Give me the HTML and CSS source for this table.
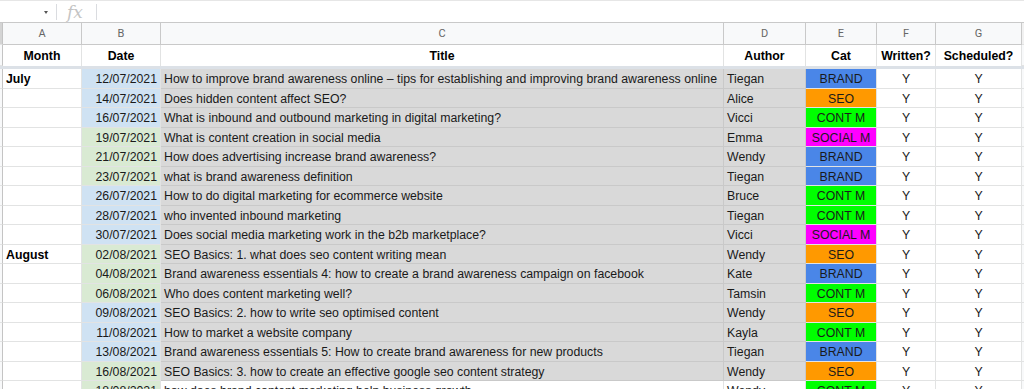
FILE: index.html
```html
<!DOCTYPE html>
<html>
<head>
<meta charset="utf-8">
<link rel="stylesheet" href="styles.css">
</head>
<body>
<div class="formula-bar">
  <div class="namebox"><span class="caret"></span></div>
  <div class="fsep"></div>
  <div class="fx">fx</div>
  <div class="fsep"></div>
</div>
<div class="sheet">
  <div class="rh ch"></div><div class="ch">A</div><div class="ch">B</div><div class="ch">C</div><div class="ch">D</div><div class="ch">E</div><div class="ch">F</div><div class="ch">G</div><div class="ch end"></div>

  <div class="rh"></div><div class="hd">Month</div><div class="hd">Date</div><div class="hd">Title</div><div class="hd">Author</div><div class="hd">Cat</div><div class="hd">Written?</div><div class="hd">Scheduled?</div><div class="end"></div>

  <div class="freeze"></div>

  <div class="rh"></div><div class="c month">July</div><div class="c date blue">12/07/2021</div><div class="c title">How to improve brand awareness online – tips for establishing and improving brand awareness online</div><div class="c author">Tiegan</div><div class="c cat brand">BRAND</div><div class="c yn">Y</div><div class="c yn">Y</div><div class="end"></div>

  <div class="rh"></div><div class="c month"></div><div class="c date blue">14/07/2021</div><div class="c title">Does hidden content affect SEO?</div><div class="c author">Alice</div><div class="c cat seo">SEO</div><div class="c yn">Y</div><div class="c yn">Y</div><div class="end"></div>

  <div class="rh"></div><div class="c month"></div><div class="c date blue">16/07/2021</div><div class="c title">What is inbound and outbound marketing in digital marketing?</div><div class="c author">Vicci</div><div class="c cat cont">CONT M</div><div class="c yn">Y</div><div class="c yn">Y</div><div class="end"></div>

  <div class="rh"></div><div class="c month"></div><div class="c date green">19/07/2021</div><div class="c title">What is content creation in social media</div><div class="c author">Emma</div><div class="c cat social">SOCIAL M</div><div class="c yn">Y</div><div class="c yn">Y</div><div class="end"></div>

  <div class="rh"></div><div class="c month"></div><div class="c date green">21/07/2021</div><div class="c title">How does advertising increase brand awareness?</div><div class="c author">Wendy</div><div class="c cat brand">BRAND</div><div class="c yn">Y</div><div class="c yn">Y</div><div class="end"></div>

  <div class="rh"></div><div class="c month"></div><div class="c date green">23/07/2021</div><div class="c title">what is brand awareness definition</div><div class="c author">Tiegan</div><div class="c cat brand">BRAND</div><div class="c yn">Y</div><div class="c yn">Y</div><div class="end"></div>

  <div class="rh"></div><div class="c month"></div><div class="c date blue">26/07/2021</div><div class="c title">How to do digital marketing for ecommerce website</div><div class="c author">Bruce</div><div class="c cat cont">CONT M</div><div class="c yn">Y</div><div class="c yn">Y</div><div class="end"></div>

  <div class="rh"></div><div class="c month"></div><div class="c date blue">28/07/2021</div><div class="c title">who invented inbound marketing</div><div class="c author">Tiegan</div><div class="c cat cont">CONT M</div><div class="c yn">Y</div><div class="c yn">Y</div><div class="end"></div>

  <div class="rh"></div><div class="c month"></div><div class="c date blue">30/07/2021</div><div class="c title">Does social media marketing work in the b2b marketplace?</div><div class="c author">Vicci</div><div class="c cat social">SOCIAL M</div><div class="c yn">Y</div><div class="c yn">Y</div><div class="end"></div>

  <div class="rh"></div><div class="c month">August</div><div class="c date green">02/08/2021</div><div class="c title">SEO Basics: 1. what does seo content writing mean</div><div class="c author">Wendy</div><div class="c cat seo">SEO</div><div class="c yn">Y</div><div class="c yn">Y</div><div class="end"></div>

  <div class="rh"></div><div class="c month"></div><div class="c date green">04/08/2021</div><div class="c title">Brand awareness essentials 4: how to create a brand awareness campaign on facebook</div><div class="c author">Kate</div><div class="c cat brand">BRAND</div><div class="c yn">Y</div><div class="c yn">Y</div><div class="end"></div>

  <div class="rh"></div><div class="c month"></div><div class="c date green">06/08/2021</div><div class="c title">Who does content marketing well?</div><div class="c author">Tamsin</div><div class="c cat cont">CONT M</div><div class="c yn">Y</div><div class="c yn">Y</div><div class="end"></div>

  <div class="rh"></div><div class="c month"></div><div class="c date blue">09/08/2021</div><div class="c title">SEO Basics: 2. how to write seo optimised content</div><div class="c author">Wendy</div><div class="c cat seo">SEO</div><div class="c yn">Y</div><div class="c yn">Y</div><div class="end"></div>

  <div class="rh"></div><div class="c month"></div><div class="c date blue">11/08/2021</div><div class="c title">How to market a website company</div><div class="c author">Kayla</div><div class="c cat cont">CONT M</div><div class="c yn">Y</div><div class="c yn">Y</div><div class="end"></div>

  <div class="rh"></div><div class="c month"></div><div class="c date blue">13/08/2021</div><div class="c title">Brand awareness essentials 5: How to create brand awareness for new products</div><div class="c author">Tiegan</div><div class="c cat brand">BRAND</div><div class="c yn">Y</div><div class="c yn">Y</div><div class="end"></div>

  <div class="rh"></div><div class="c month"></div><div class="c date green">16/08/2021</div><div class="c title">SEO Basics: 3. how to create an effective google seo content strategy</div><div class="c author">Wendy</div><div class="c cat seo">SEO</div><div class="c yn">Y</div><div class="c yn">Y</div><div class="end"></div>

  <div class="rh"></div><div class="c month"></div><div class="c date green">18/08/2021</div><div class="c title plain">how does brand content marketing help business growth</div><div class="c author plain">Wendy</div><div class="c cat cont">CONT M</div><div class="c yn">Y</div><div class="c yn">Y</div><div class="end"></div>
</div>
</body>
</html>
```

FILE: styles.css
```css
html, body {
  margin: 0;
  padding: 0;
  background: #fff;
  overflow: hidden;
  font-family: "Liberation Sans", Arial, sans-serif;
}

.formula-bar {
  height: 23px;
  box-sizing: border-box;
  border-top: 1px solid #e6e6e6;
  border-bottom: 1px solid #c9c9c9;
  display: flex;
  align-items: center;
  background: #fff;
}

.namebox {
  width: 56px;
  height: 100%;
  position: relative;
}

.caret {
  position: absolute;
  left: 44px;
  top: 10px;
  width: 0;
  height: 0;
  border-left: 2.5px solid transparent;
  border-right: 2.5px solid transparent;
  border-top: 3px solid #555;
}

.fsep {
  width: 1px;
  height: 16px;
  background: #dadce0;
}

.fx {
  width: 39px;
  padding-left: 10px;
  box-sizing: border-box;
  font-family: "DejaVu Serif", "Liberation Serif", serif;
  font-style: italic;
  font-size: 17px;
  color: #c4c4c4;
  line-height: 20px;
}

.sheet {
  display: grid;
  grid-template-columns: 3px 79px 79px 563px 82px 71px 59px 86px 2px;
  grid-template-rows: 22px 21px 3px repeat(17, 19.53px);
  font-size: 12.3px;
  color: #1a1a1a;
}

.sheet > div {
  box-sizing: border-box;
  white-space: nowrap;
  overflow: hidden;
}

.ch {
  background: #f8f9fa;
  color: #666;
  font-family: Roboto, "Liberation Sans", sans-serif;
  font-size: 11px;
  text-align: center;
  line-height: 22px;
  border-right: 1px solid #c9c9c9;
  border-bottom: 1px solid #c9c9c9;
}

.rh {
  background: #f8f9fa;
  border-right: 1px solid #c4c4c4;
  border-bottom: 1px solid #e2e3e3;
}

.rh.ch {
  background: #d4d4d4;
}

.end {
  background: #f8f9fa;
  border-bottom: 1px solid #e2e3e3;
}

.ch.end {
  background: #f1f1f1;
  border-right: none;
}

.hd {
  font-weight: bold;
  color: #000;
  text-align: center;
  line-height: 22px;
  border-right: 1px solid #e2e3e3;
}

.freeze {
  grid-column: 1 / -1;
  background: #dce1e7;
}

.c {
  line-height: 19px;
  padding: 1px 3px 0;
  border-right: 1px solid #e2e3e3;
  border-bottom: 1px solid #e2e3e3;
}

.month {
  font-weight: bold;
  color: #000;
}

.date {
  text-align: right;
}

.blue {
  background: #cfe2f3;
}

.green {
  background: #d9ead3;
}

.title, .author {
  background: #d9d9d9;
  border-right-color: #c9c9c9;
  border-bottom-color: #c9c9c9;
}

.title.plain, .author.plain {
  background: #fff;
  border-right-color: #e2e3e3;
  border-bottom-color: #e2e3e3;
}

.cat {
  text-align: center;
}

.brand {
  background: #4a86e8;
}

.seo {
  background: #ff9900;
}

.cont {
  background: #00ff00;
}

.social {
  background: #ff00ff;
}

.yn {
  text-align: center;
}
```
